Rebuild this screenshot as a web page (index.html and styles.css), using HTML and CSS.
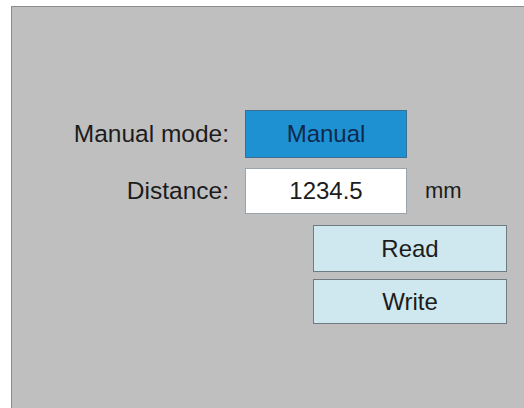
FILE: index.html
```html
<!DOCTYPE html>
<html>
<head>
  <title>Manual mode</title>
  <link rel="stylesheet" href="styles.css">
</head>
<body>
  <div class="panel">
    <div class="row">
      <span class="label">Manual mode:</span>
      <div class="mode-btn">Manual</div>
    </div>
    <div class="row row-distance">
      <span class="label">Distance:</span>
      <div class="value-box">1234.5</div>
      <span class="unit">mm</span>
    </div>
    <div class="actions">
      <div class="action-btn">Read</div>
      <div class="action-btn action-write">Write</div>
    </div>
  </div>
</body>
</html>
```

FILE: styles.css
```css
body {
  margin: 0;
  background-color: #ffffff;
  font-family: "Liberation Sans", Arial, sans-serif;
  overflow: hidden;
}
.panel {
  margin: 6px 0 0 11px;
  height: 402px;
  box-sizing: border-box;
  background-color: #bfbfbf;
  border-top: 1px solid #8c8c8c;
  border-left: 1px solid #8c8c8c;
  padding-top: 103px;
}
.row {
  display: flex;
  align-items: center;
  height: 48px;
}
.row-distance {
  margin-top: 10px;
  height: 46px;
}
.label {
  width: 217px;
  text-align: right;
  font-size: 24.5px;
  color: #1c1c1c;
  margin-right: 16px;
}
.mode-btn {
  width: 162px;
  height: 48px;
  box-sizing: border-box;
  background-color: #1e91d3;
  border: 1px solid #3a6f92;
  color: #0f2a4c;
  font-size: 24px;
  display: flex;
  align-items: center;
  justify-content: center;
}
.value-box {
  width: 162px;
  height: 46px;
  box-sizing: border-box;
  background-color: #ffffff;
  border: 1px solid #9aa4ac;
  color: #1c1c1c;
  font-size: 24px;
  display: flex;
  align-items: center;
  justify-content: center;
}
.unit {
  margin-left: 18px;
  font-size: 22px;
  color: #1c1c1c;
}
.actions {
  margin: 11px 0 0 301px;
  width: 194px;
  display: flex;
  flex-direction: column;
  gap: 7px;
}
.action-btn {
  height: 47px;
  box-sizing: border-box;
  background-color: #cfe8ef;
  border: 1px solid #6f7b80;
  color: #1c1c1c;
  font-size: 24px;
  display: flex;
  align-items: center;
  justify-content: center;
}
.action-write {
  height: 45px;
}
```
